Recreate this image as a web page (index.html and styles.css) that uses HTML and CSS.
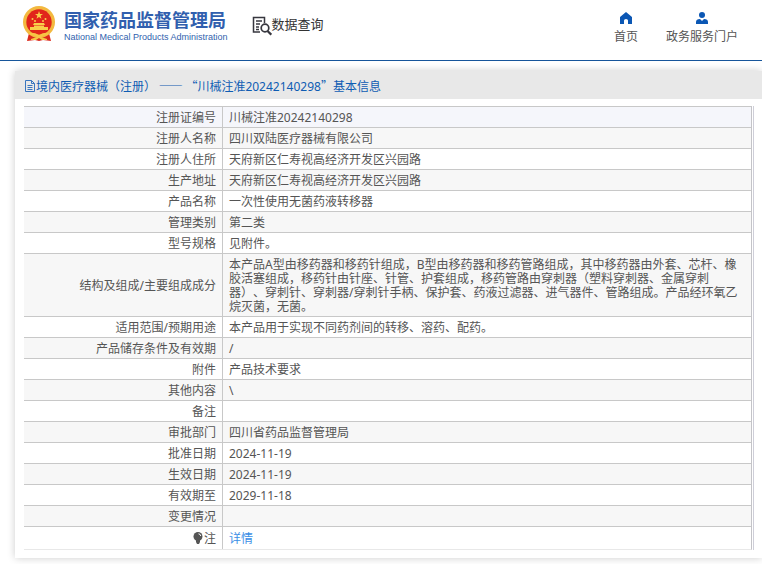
FILE: index.html
```html
<!DOCTYPE html>
<html lang="zh-CN">
<head>
    <meta charset="UTF-8">
    <meta name="viewport" content="width=device-width, initial-scale=1.0">
    <title>数据查询</title>
    <link rel="stylesheet" href="styles.css">
</head>
<body>

    <header class="header">
        <a class="logo" href="#">
            <svg class="emblem" viewBox="0 0 34 36">
                <path d="M7 27 L5 35 L13 34 L17 35 L21 34 L29 35 L27 27 Z" fill="#dc2a1c"/>
                <circle cx="17" cy="16" r="16" fill="#f3b93f"/>
                <circle cx="17" cy="16" r="12.7" fill="#e1251b"/>
                <path d="M17 5 L18 8 L21 8 L18.600 9.800 L19.500 12.800 L17 11 L14.500 12.800 L15.400 9.800 L13 8 L16 8 Z" fill="#f9cf4a"/>
                <g fill="#f9cf4a">
                    <circle cx="10.500" cy="13" r="1"/>
                    <circle cx="13" cy="15" r="1"/>
                    <circle cx="21" cy="15" r="1"/>
                    <circle cx="23.500" cy="13" r="1"/>
                    <path d="M12 17 H22 L23 19 H11 Z"/>
                    <path d="M12 19.500 H22 V21 H26 V24 H8 V21 H12 Z"/>
                </g>
                <path d="M7 27 Q12 26 17 29 Q22 26 27 27 L26 29 Q21 29 19 31 L25 33 V34 H20 L17 32 L14 34 H9 V33 L15 31 Q13 29 8 29 Z" fill="#f7c545"/>
            </svg>
            <span class="logo-text">
                <span class="logo-cn">国家药品监督管理局</span>
                <span class="logo-en">National Medical Products Administration</span>
            </span>
        </a>

        <div class="search-title">
            <svg class="search-icon" viewBox="0 0 20 20" fill="none" stroke="#37373f">
                <path d="M8 16 H1.500 V1.500 H12.500 V7" stroke-width="1.500"/>
                <path d="M4 5 H10 M4 8 H8 M4 11 H7 M4 13.500 H7" stroke-width="1.300"/>
                <circle cx="13" cy="12" r="3.800" stroke-width="1.700"/>
                <path d="M15.500 15 L19.300 18.700" stroke-width="2.200"/>
            </svg>
            <span>数据查询</span>
        </div>

        <nav class="nav">
            <a href="#">
                <svg viewBox="0 0 12 12" fill="#0b57b4"><path d="M6 0 L12 5 V12 H8 V8.500 Q8 7 6 7 Q4 7 4 8.500 V12 H0 V5 Z"/></svg>
                <span>首页</span>
            </a>
            <a href="#">
                <svg viewBox="0 0 12 12" fill="#0b57b4"><circle cx="6" cy="3" r="3"/><path d="M0 12 V10 Q0 7 4 7 L6 9 L8 7 Q12 7 12 10 V12 Z"/></svg>
                <span>政务服务门户</span>
            </a>
        </nav>
    </header>

    <main class="card">
        <h1 class="card-title">
            <svg viewBox="0 0 12 12" fill="none" stroke="#3975be"><path d="M1.500 0.500 H7.500 L10.500 3.500 V11.500 H1.500 Z M7.500 0.500 V3.500 H10.500 M3.500 5.500 H8.500 M3.500 7.500 H8.500 M3.500 9.500 H8.500"/></svg>
            <span>境内医疗器械（注册） —— “川械注准<span class="code">20242140298</span>”基本信息</span>
        </h1>

        <div class="table-wrap">
            <table class="info">
                <tbody>
                    <tr class="first"><th scope="row">注册证编号</th><td>川械注准20242140298</td></tr>
                    <tr><th scope="row">注册人名称</th><td>四川双陆医疗器械有限公司</td></tr>
                    <tr><th scope="row">注册人住所</th><td>天府新区仁寿视高经济开发区兴园路</td></tr>
                    <tr><th scope="row">生产地址</th><td>天府新区仁寿视高经济开发区兴园路</td></tr>
                    <tr><th scope="row">产品名称</th><td>一次性使用无菌药液转移器</td></tr>
                    <tr><th scope="row">管理类别</th><td>第二类</td></tr>
                    <tr><th scope="row">型号规格</th><td>见附件。</td></tr>
                    <tr><th scope="row">结构及组成/主要组成成分</th><td>本产品A型由移药器和移药针组成，B型由移药器和移药管路组成，其中移药器由外套、芯杆、橡胶活塞组成，移药针由针座、针管、护套组成，移药管路由穿刺器（塑料穿刺器、金属穿刺器）、穿刺针、穿刺器/穿刺针手柄、保护套、药液过滤器、进气器件、管路组成。产品经环氧乙烷灭菌，无菌。</td></tr>
                    <tr><th scope="row">适用范围/预期用途</th><td>本产品用于实现不同药剂间的转移、溶药、配药。</td></tr>
                    <tr><th scope="row">产品储存条件及有效期</th><td>/</td></tr>
                    <tr><th scope="row">附件</th><td>产品技术要求</td></tr>
                    <tr><th scope="row">其他内容</th><td>\</td></tr>
                    <tr><th scope="row">备注</th><td></td></tr>
                    <tr><th scope="row">审批部门</th><td>四川省药品监督管理局</td></tr>
                    <tr><th scope="row">批准日期</th><td>2024-11-19</td></tr>
                    <tr><th scope="row">生效日期</th><td>2024-11-19</td></tr>
                    <tr><th scope="row">有效期至</th><td>2029-11-18</td></tr>
                    <tr><th scope="row">变更情况</th><td></td></tr>
                    <tr class="last">
                        <th scope="row"><svg class="bulb" viewBox="0 0 10 12"><circle cx="5" cy="4.500" r="4.500" fill="#555"/><path d="M3 8 H7 V10 L6 12 H4 L3 10 Z" fill="#555"/><path d="M5.500 1.800 Q7.500 2 7.800 4" stroke="#fff" fill="none"/></svg>注</th>
                        <td><a href="#">详情</a></td>
                    </tr>
                </tbody>
            </table>
        </div>
    </main>

</body>
</html>
```
FILE: styles.css
```css
* {
    box-sizing: border-box;
}

body {
    margin: 0;
    background-color: #fff;
    color: #555;
    font-family: "Noto Sans", "Noto Sans CJK SC", sans-serif;
    font-size: 12px;
    line-height: 14px;
    text-spacing-trim: space-all;
    overflow-x: hidden;
}

a {
    color: inherit;
    text-decoration: none;
}

svg {
    flex: none;
}

/* 顶部 */
.header {
    display: flex;
    align-items: flex-start;
    height: 61px;
    padding: 0 24px 0 22px;
    border-bottom: 1px solid #17569b;
}

.logo {
    display: flex;
    gap: 8px;
    padding-top: 6px;
    color: #315fae;
}

.emblem {
    width: 34px;
    height: 36px;
}

.logo-text {
    display: flex;
    flex-direction: column;
    padding-top: 3px;
    white-space: nowrap;
}

.logo-cn {
    font-family: "Noto Sans CJK SC", sans-serif;
    font-size: 18px;
    font-weight: bold;
    line-height: 20px;
}

.logo-en {
    font-family: "Liberation Sans", Arial, sans-serif;
    font-size: 9px;
    line-height: 16px;
}

.search-title {
    display: flex;
    margin-left: 24px;
    padding-top: 16px;
    color: #333;
    font-size: 13px;
    line-height: 16px;
    white-space: nowrap;
}

.search-icon {
    width: 20px;
    height: 20px;
}

.nav {
    display: flex;
    gap: 28px;
    margin-left: auto;
    padding-top: 12px;
    white-space: nowrap;
}

.nav a {
    display: flex;
    flex-direction: column;
    align-items: center;
    gap: 6px;
}

.nav svg {
    width: 12px;
    height: 12px;
}

/* 详情卡片 */
.card {
    margin: 10px 0 12px 15px;
    padding-bottom: 8px;
    background-color: #fff;
    box-shadow: 0 0 8px rgba(0, 0, 0, 0.2);
}

.card-title {
    display: flex;
    align-items: center;
    height: 28px;
    margin: 0;
    padding: 2px 0 0 9px;
    background-color: #e8e8e8;
    color: #0e5cb3;
    font-family: "Noto Sans CJK SC", sans-serif;
    font-size: 12px;
    font-weight: normal;
}

.card-title svg {
    width: 12px;
    height: 12px;
}

.code {
    font-family: "Noto Sans", sans-serif;
}

.table-wrap {
    margin: 7px 8px 0 9px;
    padding-right: 1px;
    border-right: 1px solid #ceced8;
}

.info {
    width: 100%;
    border-collapse: separate;
    border-spacing: 0;
    border-right: 1px solid #c4c4c8;
    border-bottom: 1px solid #e8e8e8;
}

.info th,
.info td {
    height: 21px;
    padding: 4px 6px 2px;
    border-top: 1px solid #c8c8c8;
    font-weight: normal;
    vertical-align: middle;
}

.info th {
    width: 199px;
    border-right: 1px solid #c8c8c8;
    text-align: right;
}

.info td {
    padding-right: 8px;
    text-align: left;
}

.info tr:nth-child(even) {
    background-color: #f7f7f7;
}

.info .first {
    background-color: #f5f6fb;
}

.info .last th,
.info .last td {
    height: 23px;
}

.info .last a {
    color: #3a8ee6;
}

.bulb {
    width: 10px;
    height: 12px;
    margin-right: 1px;
    vertical-align: -1px;
}
```
